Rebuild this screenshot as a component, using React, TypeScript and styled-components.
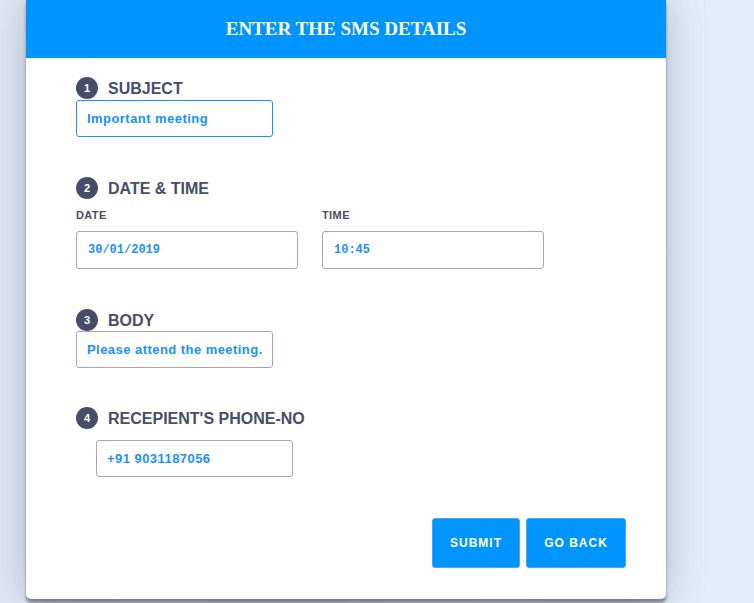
import React from "react";
import styled, { createGlobalStyle } from "styled-components";

const Global = createGlobalStyle`
  html, body { margin: 0; padding: 0; }
  body {
    background: linear-gradient(90deg, #e2e8f3 0%, #e5ecf9 100%);
    min-height: 603px;
    font-family: "Liberation Sans", Arial, sans-serif;
    overflow: hidden;
  }
`;

const Page = styled.div`
  padding-left: 26px;
  height: 603px;
  box-sizing: border-box;
`;

const Card = styled.div`
  width: 640px;
  height: 599px;
  background: #ffffff;
  border-radius: 0 0 5px 5px;
  box-shadow: 0 4px 3px rgba(60, 64, 80, 0.55), 0 0 40px rgba(40, 50, 80, 0.28);
  display: flex;
  flex-direction: column;
`;

const Header = styled.div`
  height: 58px;
  background: #0094ff;
  display: flex;
  align-items: center;
  justify-content: center;
`;

const Title = styled.h1`
  margin: 0;
  font-family: "Liberation Serif", "Times New Roman", serif;
  font-weight: bold;
  font-size: 19px;
  color: #ffffff;
`;

const Body = styled.div`
  padding: 19px 40px 0 50px;
  display: flex;
  flex-direction: column;
`;

const Section = styled.div<{ $gap?: number }>`
  display: flex;
  flex-direction: column;
  margin-bottom: ${(p) => p.$gap ?? 40}px;
`;

const HeadRow = styled.div`
  display: flex;
  align-items: center;
  height: 22px;
  gap: 10px;
`;

const Num = styled.span`
  width: 22px;
  height: 22px;
  border-radius: 50%;
  background: #474c69;
  color: #ffffff;
  font-size: 11px;
  font-weight: bold;
  display: flex;
  align-items: center;
  justify-content: center;
`;

const Heading = styled.span`
  font-size: 16px;
  font-weight: bold;
  color: #484d68;
  padding-top: 1px;
`;

const Field = styled.input<{ $active?: boolean; $w?: number; $indent?: number; $top?: number; $mono?: boolean }>`
  box-sizing: border-box;
  width: ${(p) => p.$w ?? 197}px;
  height: ${(p) => (p.$mono ? 38 : 37)}px;
  margin: ${(p) => p.$top ?? 1}px 0 0 ${(p) => p.$indent ?? 0}px;
  border: 1px solid ${(p) => (p.$active ? "#1f8fff" : "#a6a0cc")};
  border-radius: 3px;
  padding: 0 ${(p) => (p.$mono ? 11 : 10)}px;
  background: #ffffff;
  color: #1a90ff;
  font-family: ${(p) => (p.$mono ? `"Liberation Mono", "DejaVu Sans Mono", monospace` : `"Liberation Sans", Arial, sans-serif`)};
  font-size: ${(p) => (p.$mono ? 12 : 13)}px;
  font-weight: bold;
  letter-spacing: ${(p) => (p.$mono ? 0 : 0.45)}px;
  outline: none;
`;

const Columns = styled.div`
  display: flex;
  gap: 24px;
  margin-top: 10px;
`;

const Col = styled.div`
  display: flex;
  flex-direction: column;
`;

const SmallLabel = styled.label`
  font-size: 11px;
  font-weight: bold;
  color: #474c66;
  letter-spacing: 0.4px;
  height: 13px;
  line-height: 13px;
  margin-bottom: 9px;
`;

const Actions = styled.div`
  display: flex;
  justify-content: flex-end;
  gap: 6px;
`;

const Button = styled.button<{ $w: number }>`
  width: ${(p) => p.$w}px;
  height: 50px;
  background: #0094ff;
  border: 1px solid #48a9f0;
  border-radius: 3px;
  color: #ffffff;
  font-family: "Liberation Sans", Arial, sans-serif;
  font-size: 12px;
  font-weight: bold;
  letter-spacing: 1px;
  cursor: pointer;
  padding: 0;
`;

export default function App() {
  return (
    <>
      <Global />
      <Page>
        <Card>
          <Header>
            <Title>ENTER THE SMS DETAILS</Title>
          </Header>
          <Body>
            <Section $gap={40}>
              <HeadRow>
                <Num>1</Num>
                <Heading>SUBJECT</Heading>
              </HeadRow>
              <Field $active readOnly value="Important meeting" />
            </Section>
            <Section $gap={40}>
              <HeadRow>
                <Num>2</Num>
                <Heading>DATE &amp; TIME</Heading>
              </HeadRow>
              <Columns>
                <Col>
                  <SmallLabel>DATE</SmallLabel>
                  <Field $mono $w={222} $top={0} readOnly value="30/01/2019" />
                </Col>
                <Col>
                  <SmallLabel>TIME</SmallLabel>
                  <Field $mono $w={222} $top={0} readOnly value="10:45" />
                </Col>
              </Columns>
            </Section>
            <Section $gap={39}>
              <HeadRow>
                <Num>3</Num>
                <Heading>BODY</Heading>
              </HeadRow>
              <Field $top={0} readOnly value="Please attend the meeting." />
            </Section>
            <Section $gap={41}>
              <HeadRow>
                <Num>4</Num>
                <Heading>RECEPIENT'S PHONE-NO</Heading>
              </HeadRow>
              <Field $top={11} $indent={20} readOnly value="+91 9031187056" />
            </Section>
            <Actions>
              <Button $w={88}>SUBMIT</Button>
              <Button $w={100}>GO BACK</Button>
            </Actions>
          </Body>
        </Card>
      </Page>
    </>
  );
}
